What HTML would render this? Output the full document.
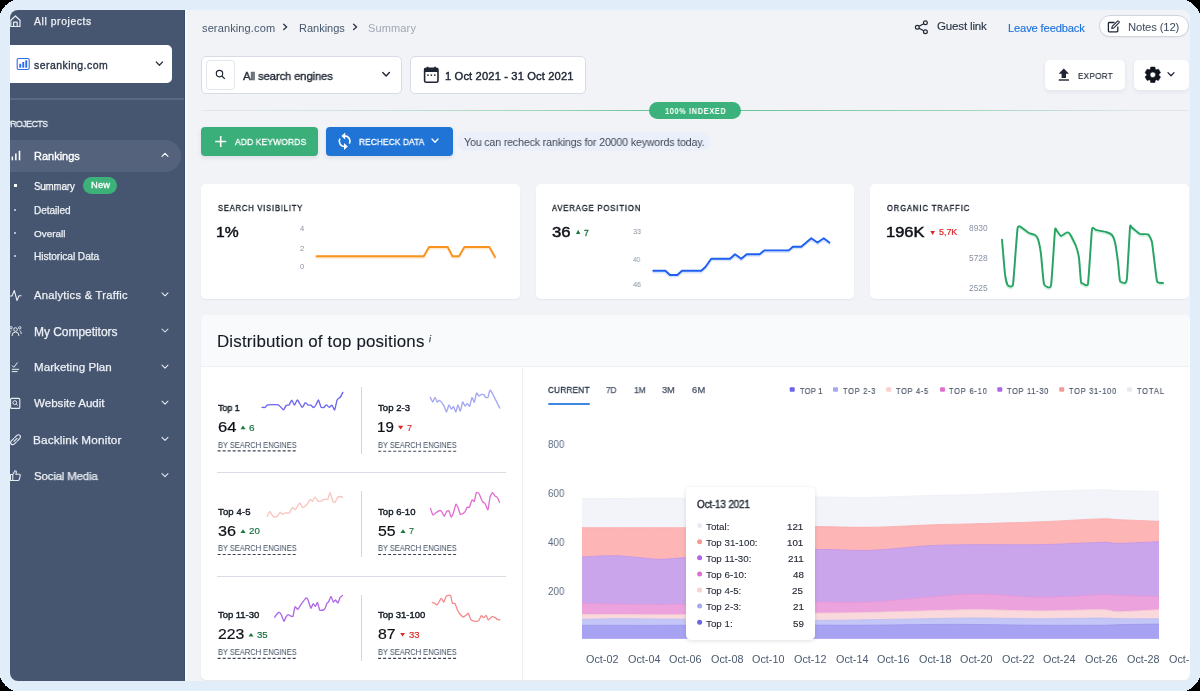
<!DOCTYPE html>
<html><head><meta charset="utf-8">
<style>
*{box-sizing:border-box;margin:0;padding:0}
html,body{width:1200px;height:691px;overflow:hidden;background:#000}
body{position:relative;font-family:"Liberation Sans",sans-serif}
#frame{position:absolute;left:0;top:0;width:1200px;height:691px;background:#e1eef9}
#app{position:absolute;left:10px;top:10px;width:1180px;height:670.7px;border-radius:8px;overflow:hidden;background:#f1f3f7}
#in{position:absolute;left:-10px;top:-10px;width:1200px;height:691px}
.a{position:absolute}
.t{position:absolute;white-space:nowrap;line-height:1;transform-origin:0 0;will-change:transform}
.box{position:absolute;background:#fff;border:1px solid #d6dbe4;border-radius:5px}
.card{position:absolute;background:#fff;border-radius:5px;box-shadow:0 1px 2px rgba(30,40,60,.06)}
svg{position:absolute;left:0;top:0;overflow:visible}
</style></head><body>
<div id="frame"></div>
<div id="app"><div id="in">
  <!-- sidebar -->
  <div class="a" style="left:10px;top:10px;width:175px;height:671px;background:#465670"></div>
  <div class="a" style="left:184px;top:10px;width:1px;height:670px;background:#38496a;opacity:.8"></div>
  <div class="a" style="left:185px;top:10px;width:1.5px;height:670px;background:#f9fafc"></div>
  <div class="a" style="left:6px;top:45px;width:166px;height:37.5px;background:#fff;border-radius:5px"></div>
  <div class="a" style="left:10px;top:98.3px;width:174px;height:1.5px;background:#5a697f"></div>
  <div class="a" style="left:-10px;top:140px;width:191px;height:32px;background:#54637b;border-radius:16px"></div>
  <div class="a" style="left:83.3px;top:177px;width:33.7px;height:17.2px;background:#3cb17a;border-radius:9px"></div>
  <div class="a" style="left:14.2px;top:183.7px;width:3px;height:3px;background:#fff"></div>
  <div class="a" style="left:14.2px;top:209.3px;width:2px;height:2px;background:#b3bcc9"></div>
  <div class="a" style="left:14.2px;top:232.3px;width:2px;height:2px;background:#b3bcc9"></div>
  <div class="a" style="left:14.2px;top:254.6px;width:2px;height:2px;background:#b3bcc9"></div>

  <!-- header boxes -->
  <div class="box" style="left:201px;top:56px;width:201px;height:37.5px"></div>
  <div class="a" style="left:206px;top:60px;width:29px;height:29.6px;border:1px solid #e3e7ee;border-radius:4px;background:#fff"></div>
  <div class="box" style="left:410.3px;top:56.3px;width:175.5px;height:37.4px"></div>
  <div class="a" style="left:1098.7px;top:15.3px;width:90px;height:22.2px;border:1px solid #cfd4dd;border-radius:11px;background:#fff;box-shadow:0 1px 2px rgba(0,0,0,.05)"></div>
  <div class="card" style="left:1045px;top:60px;width:80.3px;height:29.7px;box-shadow:0 2px 4px rgba(30,40,60,.07)"></div>
  <div class="card" style="left:1133.7px;top:60px;width:55.3px;height:29.7px;box-shadow:0 2px 4px rgba(30,40,60,.07)"></div>
  <div class="a" style="left:201px;top:109.5px;width:988px;height:1.3px;background:linear-gradient(90deg,#e3e6eb 0%,#cfe3dc 15%,#9fd5bb 35%,#6fc49c 45%,#6fc49c 56%,#9ad3b8 75%,#dfe5e8 95%,#e3e6eb 100%)"></div>
  <div class="a" style="left:648.7px;top:101.7px;width:92.3px;height:17px;background:#3bb27b;border-radius:8.5px"></div>
  <div class="a" style="left:201.2px;top:126.8px;width:116.8px;height:29px;background:#3aaf7a;border-radius:4px;box-shadow:0 2px 4px rgba(30,40,60,.10)"></div>
  <div class="a" style="left:326px;top:126.9px;width:126.5px;height:28.7px;background:#1f74d6;border-radius:4px;box-shadow:0 2px 4px rgba(30,40,60,.10)"></div>
  <div class="a" style="left:456.8px;top:131.8px;width:254.2px;height:19.2px;background:#ebeffa;border-radius:10px"></div>

  <!-- cards -->
  <div class="card" style="left:201px;top:184px;width:319px;height:114.5px"></div>
  <div class="card" style="left:536px;top:184px;width:317.75px;height:114.5px"></div>
  <div class="card" style="left:870.25px;top:184px;width:319px;height:114.5px"></div>

  <!-- distribution -->
  <div class="card" style="left:200.8px;top:314.7px;width:988.9px;height:365.5px;overflow:hidden">
    <div class="a" style="left:0;top:0;width:988px;height:52.3px;background:#f9fafc;border-bottom:1px solid #eef0f5"></div>
    <div class="a" style="left:321px;top:53.5px;width:1px;height:320px;background:#eceef3"></div>
  </div>
  <div class="a" style="left:217px;top:471.6px;width:289px;height:1px;background:#d9dee6"></div>
  <div class="a" style="left:217px;top:575.8px;width:289px;height:1px;background:#d9dee6"></div>
  <div class="a" style="left:361px;top:387.2px;width:1px;height:67px;background:#d0d6df"></div>
  <div class="a" style="left:361px;top:490.8px;width:1px;height:66.5px;background:#d0d6df"></div>
  <div class="a" style="left:361px;top:594.7px;width:1px;height:66.5px;background:#d0d6df"></div>
  <div class="a" style="left:548px;top:403px;width:42px;height:2px;background:#3d86e1;border-radius:1px"></div>

  <svg width="1200" height="691" viewBox="0 0 1200 691"><path d="M582.00,498.60 C588.00,498.58 605.50,498.55 618.00,498.50 C630.50,498.45 645.67,498.35 657.00,498.30 C668.33,498.25 670.33,498.32 686.00,498.20 C701.67,498.08 729.33,497.82 751.00,497.60 C772.67,497.38 796.17,496.93 816.00,496.90 C835.83,496.87 851.17,497.63 870.00,497.40 C888.83,497.17 911.17,495.97 929.00,495.50 C946.83,495.03 958.50,495.23 977.00,494.60 C995.50,493.97 1019.50,492.50 1040.00,491.70 C1060.50,490.90 1086.83,489.97 1100.00,489.80 C1113.17,489.63 1109.17,490.42 1119.00,490.70 C1128.83,490.98 1152.33,491.37 1159.00,491.50 L1159,638.8 L582,638.8 Z" fill="#f2f4f9"/>
<path d="M582.00,498.60 C588.00,498.58 605.50,498.55 618.00,498.50 C630.50,498.45 645.67,498.35 657.00,498.30 C668.33,498.25 670.33,498.32 686.00,498.20 C701.67,498.08 729.33,497.82 751.00,497.60 C772.67,497.38 796.17,496.93 816.00,496.90 C835.83,496.87 851.17,497.63 870.00,497.40 C888.83,497.17 911.17,495.97 929.00,495.50 C946.83,495.03 958.50,495.23 977.00,494.60 C995.50,493.97 1019.50,492.50 1040.00,491.70 C1060.50,490.90 1086.83,489.97 1100.00,489.80 C1113.17,489.63 1109.17,490.42 1119.00,490.70 C1128.83,490.98 1152.33,491.37 1159.00,491.50" fill="none" stroke="#eceff6" stroke-width="0.8"/>
<path d="M582.00,527.70 C588.00,527.70 605.50,527.70 618.00,527.70 C630.50,527.70 645.67,527.70 657.00,527.70 C668.33,527.70 670.33,527.78 686.00,527.70 C701.67,527.62 729.33,527.38 751.00,527.20 C772.67,527.02 796.17,526.58 816.00,526.60 C835.83,526.62 851.17,527.58 870.00,527.30 C888.83,527.02 911.17,525.50 929.00,524.90 C946.83,524.30 958.50,524.22 977.00,523.70 C995.50,523.18 1019.50,522.60 1040.00,521.80 C1060.50,521.00 1086.83,519.25 1100.00,518.90 C1113.17,518.55 1109.17,519.30 1119.00,519.70 C1128.83,520.10 1152.33,521.03 1159.00,521.30 L1159,638.8 L582,638.8 Z" fill="#fdb5b6"/>
<path d="M582.00,527.70 C588.00,527.70 605.50,527.70 618.00,527.70 C630.50,527.70 645.67,527.70 657.00,527.70 C668.33,527.70 670.33,527.78 686.00,527.70 C701.67,527.62 729.33,527.38 751.00,527.20 C772.67,527.02 796.17,526.58 816.00,526.60 C835.83,526.62 851.17,527.58 870.00,527.30 C888.83,527.02 911.17,525.50 929.00,524.90 C946.83,524.30 958.50,524.22 977.00,523.70 C995.50,523.18 1019.50,522.60 1040.00,521.80 C1060.50,521.00 1086.83,519.25 1100.00,518.90 C1113.17,518.55 1109.17,519.30 1119.00,519.70 C1128.83,520.10 1152.33,521.03 1159.00,521.30" fill="none" stroke="#fba9ab" stroke-width="0.8"/>
<path d="M582.00,556.90 C588.00,556.72 605.50,555.42 618.00,555.80 C630.50,556.18 645.67,558.90 657.00,559.20 C668.33,559.50 670.33,558.52 686.00,557.60 C701.67,556.68 729.33,555.05 751.00,553.70 C772.67,552.35 796.17,550.05 816.00,549.50 C835.83,548.95 851.17,551.03 870.00,550.40 C888.83,549.77 911.17,546.65 929.00,545.70 C946.83,544.75 958.50,544.87 977.00,544.70 C995.50,544.53 1019.50,545.08 1040.00,544.70 C1060.50,544.32 1086.83,542.63 1100.00,542.40 C1113.17,542.17 1109.17,543.42 1119.00,543.30 C1128.83,543.18 1152.33,541.97 1159.00,541.70 L1159,638.8 L582,638.8 Z" fill="#cba5ec"/>
<path d="M582.00,556.90 C588.00,556.72 605.50,555.42 618.00,555.80 C630.50,556.18 645.67,558.90 657.00,559.20 C668.33,559.50 670.33,558.52 686.00,557.60 C701.67,556.68 729.33,555.05 751.00,553.70 C772.67,552.35 796.17,550.05 816.00,549.50 C835.83,548.95 851.17,551.03 870.00,550.40 C888.83,549.77 911.17,546.65 929.00,545.70 C946.83,544.75 958.50,544.87 977.00,544.70 C995.50,544.53 1019.50,545.08 1040.00,544.70 C1060.50,544.32 1086.83,542.63 1100.00,542.40 C1113.17,542.17 1109.17,543.42 1119.00,543.30 C1128.83,543.18 1152.33,541.97 1159.00,541.70" fill="none" stroke="#c195ea" stroke-width="0.8"/>
<path d="M582.00,603.40 C588.00,603.52 605.50,603.88 618.00,604.10 C630.50,604.32 645.67,604.68 657.00,604.70 C668.33,604.72 670.33,604.47 686.00,604.20 C701.67,603.93 729.33,603.47 751.00,603.10 C772.67,602.73 796.17,602.18 816.00,602.00 C835.83,601.82 851.17,602.80 870.00,602.00 C888.83,601.20 911.17,598.52 929.00,597.20 C946.83,595.88 958.50,594.08 977.00,594.10 C995.50,594.12 1019.50,597.17 1040.00,597.30 C1060.50,597.43 1086.83,595.22 1100.00,594.90 C1113.17,594.58 1109.17,595.12 1119.00,595.40 C1128.83,595.68 1152.33,596.40 1159.00,596.60 L1159,638.8 L582,638.8 Z" fill="#eca3dd"/>
<path d="M582.00,603.40 C588.00,603.52 605.50,603.88 618.00,604.10 C630.50,604.32 645.67,604.68 657.00,604.70 C668.33,604.72 670.33,604.47 686.00,604.20 C701.67,603.93 729.33,603.47 751.00,603.10 C772.67,602.73 796.17,602.18 816.00,602.00 C835.83,601.82 851.17,602.80 870.00,602.00 C888.83,601.20 911.17,598.52 929.00,597.20 C946.83,595.88 958.50,594.08 977.00,594.10 C995.50,594.12 1019.50,597.17 1040.00,597.30 C1060.50,597.43 1086.83,595.22 1100.00,594.90 C1113.17,594.58 1109.17,595.12 1119.00,595.40 C1128.83,595.68 1152.33,596.40 1159.00,596.60" fill="none" stroke="#e797d8" stroke-width="0.8"/>
<path d="M582.00,614.60 C588.00,614.60 605.50,614.57 618.00,614.60 C630.50,614.63 645.67,614.78 657.00,614.80 C668.33,614.82 670.33,614.85 686.00,614.70 C701.67,614.55 729.33,614.15 751.00,613.90 C772.67,613.65 796.17,613.43 816.00,613.20 C835.83,612.97 851.17,612.90 870.00,612.50 C888.83,612.10 911.17,611.27 929.00,610.80 C946.83,610.33 958.50,609.67 977.00,609.70 C995.50,609.73 1019.50,611.00 1040.00,611.00 C1060.50,611.00 1086.83,609.58 1100.00,609.70 C1113.17,609.82 1109.17,611.70 1119.00,611.70 C1128.83,611.70 1152.33,610.03 1159.00,609.70 L1159,638.8 L582,638.8 Z" fill="#f9d9db"/>
<path d="M582.00,614.60 C588.00,614.60 605.50,614.57 618.00,614.60 C630.50,614.63 645.67,614.78 657.00,614.80 C668.33,614.82 670.33,614.85 686.00,614.70 C701.67,614.55 729.33,614.15 751.00,613.90 C772.67,613.65 796.17,613.43 816.00,613.20 C835.83,612.97 851.17,612.90 870.00,612.50 C888.83,612.10 911.17,611.27 929.00,610.80 C946.83,610.33 958.50,609.67 977.00,609.70 C995.50,609.73 1019.50,611.00 1040.00,611.00 C1060.50,611.00 1086.83,609.58 1100.00,609.70 C1113.17,609.82 1109.17,611.70 1119.00,611.70 C1128.83,611.70 1152.33,610.03 1159.00,609.70" fill="none" stroke="#f6d0d3" stroke-width="0.8"/>
<path d="M582.00,619.30 C588.00,619.20 605.50,618.75 618.00,618.70 C630.50,618.65 645.67,618.92 657.00,619.00 C668.33,619.08 670.33,619.07 686.00,619.20 C701.67,619.33 729.33,619.60 751.00,619.80 C772.67,620.00 796.17,620.42 816.00,620.40 C835.83,620.38 851.17,619.98 870.00,619.70 C888.83,619.42 911.17,618.98 929.00,618.70 C946.83,618.42 958.50,617.98 977.00,618.00 C995.50,618.02 1019.50,618.78 1040.00,618.80 C1060.50,618.82 1086.83,618.12 1100.00,618.10 C1113.17,618.08 1109.17,618.58 1119.00,618.70 C1128.83,618.82 1152.33,618.78 1159.00,618.80 L1159,638.8 L582,638.8 Z" fill="#c3c6f6"/>
<path d="M582.00,619.30 C588.00,619.20 605.50,618.75 618.00,618.70 C630.50,618.65 645.67,618.92 657.00,619.00 C668.33,619.08 670.33,619.07 686.00,619.20 C701.67,619.33 729.33,619.60 751.00,619.80 C772.67,620.00 796.17,620.42 816.00,620.40 C835.83,620.38 851.17,619.98 870.00,619.70 C888.83,619.42 911.17,618.98 929.00,618.70 C946.83,618.42 958.50,617.98 977.00,618.00 C995.50,618.02 1019.50,618.78 1040.00,618.80 C1060.50,618.82 1086.83,618.12 1100.00,618.10 C1113.17,618.08 1109.17,618.58 1119.00,618.70 C1128.83,618.82 1152.33,618.78 1159.00,618.80" fill="none" stroke="#b9bcf3" stroke-width="0.8"/>
<path d="M582.00,625.40 C588.00,625.40 605.50,625.40 618.00,625.40 C630.50,625.40 645.67,625.42 657.00,625.40 C668.33,625.38 670.33,625.33 686.00,625.30 C701.67,625.27 729.33,625.22 751.00,625.20 C772.67,625.18 796.17,625.20 816.00,625.20 C835.83,625.20 851.17,625.32 870.00,625.20 C888.83,625.08 911.17,624.62 929.00,624.50 C946.83,624.38 958.50,624.37 977.00,624.50 C995.50,624.63 1019.50,625.17 1040.00,625.30 C1060.50,625.43 1086.83,625.40 1100.00,625.30 C1113.17,625.20 1109.17,624.90 1119.00,624.70 C1128.83,624.50 1152.33,624.20 1159.00,624.10 L1159,638.8 L582,638.8 Z" fill="#a8a2f3"/>
<path d="M582.00,625.40 C588.00,625.40 605.50,625.40 618.00,625.40 C630.50,625.40 645.67,625.42 657.00,625.40 C668.33,625.38 670.33,625.33 686.00,625.30 C701.67,625.27 729.33,625.22 751.00,625.20 C772.67,625.18 796.17,625.20 816.00,625.20 C835.83,625.20 851.17,625.32 870.00,625.20 C888.83,625.08 911.17,624.62 929.00,624.50 C946.83,624.38 958.50,624.37 977.00,624.50 C995.50,624.63 1019.50,625.17 1040.00,625.30 C1060.50,625.43 1086.83,625.40 1100.00,625.30 C1113.17,625.20 1109.17,624.90 1119.00,624.70 C1128.83,624.50 1152.33,624.20 1159.00,624.10" fill="none" stroke="#9d96f0" stroke-width="0.8"/>
<path d="M316.50,257.85 L423.75,257.85 L429.00,248.60 L447.70,248.60 L452.50,257.85 L459.00,257.85 L464.40,248.60 L489.40,248.60 L495.00,258.50" fill="none" stroke="#fde3c4" stroke-width="2" stroke-linejoin="round" stroke-linecap="round" opacity="0.8"/>
<path d="M316.50,256.25 L423.75,256.25 L429.00,247.00 L447.70,247.00 L452.50,256.25 L459.00,256.25 L464.40,247.00 L489.40,247.00 L495.00,256.90" fill="none" stroke="#f7931e" stroke-width="1.9" stroke-linejoin="round" stroke-linecap="round"/>
<path d="M653.30,272.40 L665.40,272.40 L670.00,276.60 L677.30,276.60 L682.00,272.40 L701.25,272.40 L705.40,268.60 L711.25,260.35 L730.00,260.35 L735.00,255.80 L741.25,260.35 L746.70,255.80 L759.60,255.80 L764.20,252.00 L788.75,252.00 L792.90,248.30 L801.25,248.30 L811.25,239.90 L817.50,244.10 L823.75,239.90 L829.40,244.10" fill="none" stroke="#cfdcfb" stroke-width="2" stroke-linejoin="round" stroke-linecap="round" opacity="0.8"/>
<path d="M653.30,270.80 L665.40,270.80 L670.00,275.00 L677.30,275.00 L682.00,270.80 L701.25,270.80 L705.40,267.00 L711.25,258.75 L730.00,258.75 L735.00,254.20 L741.25,258.75 L746.70,254.20 L759.60,254.20 L764.20,250.40 L788.75,250.40 L792.90,246.70 L801.25,246.70 L811.25,238.30 L817.50,242.50 L823.75,238.30 L829.40,242.50" fill="none" stroke="#1d5ff0" stroke-width="1.9" stroke-linejoin="round" stroke-linecap="round"/>
<path d="M1002.00,241.20 C1002.21,243.66 1004.60,272.36 1005.00,275.60 C1005.40,278.84 1007.03,285.86 1007.60,286.60 C1008.17,287.34 1012.29,290.07 1013.00,286.00 C1013.71,281.93 1016.89,233.59 1017.60,229.60 C1018.31,225.61 1022.19,229.84 1023.00,230.20 C1023.81,230.56 1028.14,234.14 1029.00,234.60 C1029.86,235.06 1034.36,236.17 1035.00,236.60 C1035.64,237.03 1037.57,239.24 1038.00,240.60 C1038.43,241.96 1040.57,252.39 1041.00,255.60 C1041.43,258.81 1043.29,283.34 1044.00,285.60 C1044.71,287.86 1050.21,291.06 1051.00,287.20 C1051.79,283.34 1054.57,235.50 1055.00,231.60 C1055.43,227.70 1056.57,232.17 1057.00,232.60 C1057.43,233.03 1060.29,237.50 1061.00,237.60 C1061.71,237.70 1066.36,234.14 1067.00,234.00 C1067.64,233.86 1069.36,234.63 1070.00,235.60 C1070.64,236.57 1075.36,245.89 1076.00,247.60 C1076.64,249.31 1078.64,257.03 1079.00,259.60 C1079.36,262.17 1080.71,281.77 1081.00,283.60 C1081.29,285.43 1082.50,285.09 1083.00,285.20 C1083.50,285.31 1087.36,289.07 1088.00,285.20 C1088.64,281.33 1091.43,234.83 1092.00,231.00 C1092.57,227.17 1095.00,231.41 1096.00,231.60 C1097.00,231.79 1104.86,233.24 1106.00,233.60 C1107.14,233.96 1111.36,235.89 1112.00,236.60 C1112.64,237.31 1114.57,241.67 1115.00,243.60 C1115.43,245.53 1117.64,260.81 1118.00,263.60 C1118.36,266.39 1119.50,281.10 1120.00,282.60 C1120.50,284.10 1124.50,284.81 1125.00,284.60 C1125.50,284.39 1126.64,283.60 1127.00,279.60 C1127.36,275.60 1129.64,232.20 1130.00,228.60 C1130.36,225.00 1131.29,228.70 1132.00,229.20 C1132.71,229.70 1138.86,235.11 1140.00,235.60 C1141.14,236.09 1147.14,235.43 1148.00,236.00 C1148.86,236.57 1151.36,240.27 1152.00,243.60 C1152.64,246.93 1156.21,279.67 1157.00,282.60 C1157.79,285.53 1162.57,284.46 1163.00,284.60" fill="none" stroke="#cdeedb" stroke-width="2" stroke-linejoin="round" stroke-linecap="round" opacity="0.8"/>
<path d="M1002.00,239.60 C1002.21,242.06 1004.60,270.76 1005.00,274.00 C1005.40,277.24 1007.03,284.26 1007.60,285.00 C1008.17,285.74 1012.29,288.47 1013.00,284.40 C1013.71,280.33 1016.89,231.99 1017.60,228.00 C1018.31,224.01 1022.19,228.24 1023.00,228.60 C1023.81,228.96 1028.14,232.54 1029.00,233.00 C1029.86,233.46 1034.36,234.57 1035.00,235.00 C1035.64,235.43 1037.57,237.64 1038.00,239.00 C1038.43,240.36 1040.57,250.79 1041.00,254.00 C1041.43,257.21 1043.29,281.74 1044.00,284.00 C1044.71,286.26 1050.21,289.46 1051.00,285.60 C1051.79,281.74 1054.57,233.90 1055.00,230.00 C1055.43,226.10 1056.57,230.57 1057.00,231.00 C1057.43,231.43 1060.29,235.90 1061.00,236.00 C1061.71,236.10 1066.36,232.54 1067.00,232.40 C1067.64,232.26 1069.36,233.03 1070.00,234.00 C1070.64,234.97 1075.36,244.29 1076.00,246.00 C1076.64,247.71 1078.64,255.43 1079.00,258.00 C1079.36,260.57 1080.71,280.17 1081.00,282.00 C1081.29,283.83 1082.50,283.49 1083.00,283.60 C1083.50,283.71 1087.36,287.47 1088.00,283.60 C1088.64,279.73 1091.43,233.23 1092.00,229.40 C1092.57,225.57 1095.00,229.81 1096.00,230.00 C1097.00,230.19 1104.86,231.64 1106.00,232.00 C1107.14,232.36 1111.36,234.29 1112.00,235.00 C1112.64,235.71 1114.57,240.07 1115.00,242.00 C1115.43,243.93 1117.64,259.21 1118.00,262.00 C1118.36,264.79 1119.50,279.50 1120.00,281.00 C1120.50,282.50 1124.50,283.21 1125.00,283.00 C1125.50,282.79 1126.64,282.00 1127.00,278.00 C1127.36,274.00 1129.64,230.60 1130.00,227.00 C1130.36,223.40 1131.29,227.10 1132.00,227.60 C1132.71,228.10 1138.86,233.51 1140.00,234.00 C1141.14,234.49 1147.14,233.83 1148.00,234.40 C1148.86,234.97 1151.36,238.67 1152.00,242.00 C1152.64,245.33 1156.21,278.07 1157.00,281.00 C1157.79,283.93 1162.57,282.86 1163.00,283.00" fill="none" stroke="#27a463" stroke-width="1.9" stroke-linejoin="round" stroke-linecap="round"/>
<path d="M262.10,407.40 C262.35,407.40 264.63,407.61 265.10,407.40 C265.57,407.19 266.65,405.11 267.75,404.90 C268.85,404.69 276.94,404.48 278.25,404.90 C279.56,405.32 282.85,409.86 283.50,409.90 C284.15,409.94 285.63,405.82 286.10,405.40 C286.57,404.98 288.63,405.33 289.10,404.90 C289.57,404.47 291.31,400.18 291.75,400.20 C292.19,400.22 293.93,405.12 294.40,405.10 C294.87,405.08 296.75,399.81 297.40,400.00 C298.05,400.19 301.60,407.18 302.25,407.40 C302.90,407.62 304.75,402.79 305.25,402.60 C305.75,402.41 307.78,404.89 308.25,405.10 C308.72,405.31 310.46,404.90 310.90,405.10 C311.34,405.30 313.09,407.49 313.50,407.50 C313.91,407.51 315.39,405.88 315.80,405.25 C316.21,404.62 317.97,399.85 318.40,400.00 C318.83,400.15 320.53,406.48 321.00,407.10 C321.47,407.72 323.56,407.58 324.00,407.40 C324.44,407.22 325.86,404.90 326.30,404.90 C326.74,404.90 328.83,407.38 329.30,407.40 C329.77,407.42 331.45,404.89 331.90,405.10 C332.35,405.31 334.27,410.32 334.70,409.90 C335.13,409.47 336.62,401.07 337.10,400.00 C337.58,398.93 340.02,397.64 340.50,397.00 C340.98,396.36 342.61,392.74 342.80,392.35" fill="none" stroke="#6c65f0" stroke-width="1.35" stroke-linejoin="round" stroke-linecap="round"/>
<path d="M430.30,397.30 C430.50,397.69 432.31,401.98 432.70,402.00 C433.09,402.02 434.62,397.50 435.00,397.50 C435.38,397.50 436.91,401.75 437.30,402.00 C437.69,402.25 439.17,400.23 439.70,400.50 C440.23,400.77 443.13,404.34 443.70,405.30 C444.27,406.26 446.07,412.02 446.50,412.00 C446.93,411.98 448.50,405.24 448.90,405.00 C449.30,404.76 450.92,408.98 451.30,409.10 C451.68,409.23 453.12,406.26 453.50,406.50 C453.88,406.74 455.43,412.13 455.80,412.00 C456.18,411.87 457.62,404.97 458.00,404.90 C458.38,404.82 459.91,411.34 460.30,411.10 C460.69,410.86 462.31,402.41 462.70,402.00 C463.09,401.59 464.62,406.09 465.00,406.20 C465.38,406.31 466.91,403.30 467.30,403.30 C467.69,403.30 469.31,406.68 469.70,406.20 C470.09,405.72 471.62,397.83 472.00,397.50 C472.38,397.17 473.93,402.57 474.30,402.20 C474.68,401.83 476.12,393.60 476.50,393.10 C476.88,392.60 478.52,396.07 478.90,396.20 C479.27,396.33 480.60,394.82 481.00,394.70 C481.40,394.57 483.31,394.48 483.70,394.70 C484.09,394.92 485.34,397.08 485.70,397.30 C486.06,397.52 487.60,397.89 488.00,397.30 C488.40,396.71 489.52,389.31 490.50,390.20 C491.48,391.09 498.93,406.52 499.70,408.00" fill="none" stroke="#a3a6f1" stroke-width="1.35" stroke-linejoin="round" stroke-linecap="round"/>
<path d="M267.30,516.30 C267.52,515.89 269.46,511.42 269.90,511.40 C270.34,511.38 272.13,515.53 272.60,516.00 C273.07,516.47 275.06,517.03 275.50,517.00 C275.94,516.97 277.52,516.01 277.90,515.60 C278.28,515.19 279.72,512.21 280.10,512.10 C280.48,511.99 282.06,514.23 282.50,514.30 C282.94,514.37 284.83,513.02 285.40,512.90 C285.97,512.78 288.71,513.35 289.30,512.90 C289.89,512.45 292.00,507.77 292.50,507.50 C293.00,507.23 294.68,509.98 295.30,509.60 C295.92,509.23 299.28,503.16 299.90,503.00 C300.52,502.84 302.08,507.61 302.70,507.70 C303.32,507.79 306.68,504.80 307.30,504.10 C307.93,503.40 309.77,499.53 310.20,499.30 C310.62,499.07 312.00,501.48 312.40,501.30 C312.80,501.12 314.53,497.22 315.00,497.20 C315.47,497.18 317.52,500.78 318.00,501.10 C318.48,501.43 320.28,501.25 320.80,501.10 C321.32,500.95 323.71,499.46 324.30,499.30 C324.89,499.14 327.42,499.76 327.90,499.20 C328.38,498.64 329.69,492.44 330.10,492.60 C330.51,492.76 332.40,500.28 332.80,501.10 C333.20,501.93 334.48,502.82 334.90,502.50 C335.32,502.18 337.32,497.70 337.80,497.20 C338.28,496.70 340.19,496.49 340.60,496.50 C341.01,496.51 342.52,497.28 342.70,497.35" fill="none" stroke="#f8c5bf" stroke-width="1.35" stroke-linejoin="round" stroke-linecap="round"/>
<path d="M430.50,508.50 C430.70,509.04 432.38,514.68 432.90,515.00 C433.42,515.32 436.13,512.67 436.70,512.30 C437.27,511.92 439.28,510.55 439.70,510.50 C440.12,510.45 441.32,511.22 441.70,511.70 C442.08,512.18 443.92,516.28 444.30,516.30 C444.68,516.32 445.92,512.37 446.30,511.90 C446.68,511.43 448.48,510.26 448.90,510.70 C449.32,511.14 450.90,517.09 451.30,517.20 C451.70,517.31 453.32,513.08 453.70,512.00 C454.07,510.93 455.47,504.74 455.80,504.30 C456.13,503.86 457.33,505.89 457.70,506.70 C458.07,507.51 459.78,513.42 460.20,514.00 C460.62,514.58 462.27,513.93 462.70,513.70 C463.12,513.48 464.94,511.83 465.30,511.30 C465.66,510.77 466.65,507.66 467.00,507.30 C467.35,506.94 469.08,507.62 469.50,507.00 C469.92,506.38 471.60,500.38 472.00,499.90 C472.40,499.42 473.94,501.90 474.30,501.30 C474.66,500.70 475.91,493.33 476.30,492.70 C476.69,492.07 478.50,492.98 479.00,493.70 C479.50,494.42 481.80,500.47 482.30,501.30 C482.80,502.13 484.52,503.00 485.00,503.70 C485.48,504.40 487.58,510.23 488.00,509.70 C488.42,509.17 489.62,498.73 490.00,497.30 C490.38,495.87 492.08,492.60 492.50,492.50 C492.92,492.40 494.60,495.70 495.00,496.10 C495.40,496.50 496.93,496.78 497.30,497.30 C497.68,497.82 499.32,501.88 499.50,502.30" fill="none" stroke="#e26fd3" stroke-width="1.35" stroke-linejoin="round" stroke-linecap="round"/>
<path d="M274.70,617.30 C274.87,617.05 276.32,614.72 276.70,614.30 C277.08,613.88 278.92,612.27 279.30,612.30 C279.68,612.33 280.92,613.96 281.30,614.70 C281.68,615.44 283.51,621.01 283.90,621.20 C284.29,621.39 285.63,617.54 286.00,617.00 C286.37,616.46 287.91,614.78 288.30,614.70 C288.69,614.62 290.31,615.98 290.70,616.10 C291.09,616.22 292.64,616.88 293.00,616.10 C293.36,615.33 294.61,607.37 295.00,606.80 C295.39,606.23 297.18,609.53 297.70,609.30 C298.22,609.07 300.61,604.94 301.30,604.00 C301.99,603.06 305.44,598.33 306.00,598.00 C306.56,597.67 307.60,599.16 308.00,600.00 C308.40,600.84 310.37,607.79 310.80,608.10 C311.23,608.41 312.81,603.85 313.20,603.70 C313.59,603.55 315.14,606.40 315.50,606.30 C315.86,606.20 317.15,602.19 317.50,602.50 C317.85,602.81 319.22,609.38 319.70,610.00 C320.18,610.62 322.83,610.17 323.30,610.00 C323.77,609.83 325.02,608.52 325.30,608.00 C325.58,607.48 326.42,604.23 326.70,603.70 C326.98,603.18 328.34,602.32 328.70,601.70 C329.06,601.08 330.62,596.27 331.00,596.30 C331.38,596.32 332.93,601.70 333.30,602.00 C333.68,602.30 335.12,599.80 335.50,599.90 C335.88,600.00 337.52,603.40 337.90,603.20 C338.27,603.00 339.62,598.14 340.00,597.50 C340.38,596.86 342.29,595.67 342.50,595.50" fill="none" stroke="#ae68e6" stroke-width="1.35" stroke-linejoin="round" stroke-linecap="round"/>
<path d="M432.30,602.50 C432.50,602.56 434.31,602.99 434.70,603.20 C435.09,603.41 436.45,605.41 437.00,605.00 C437.55,604.59 440.74,598.52 441.30,598.30 C441.86,598.07 443.31,602.43 443.70,602.30 C444.09,602.17 445.64,597.28 446.00,596.70 C446.36,596.12 447.61,595.38 448.00,595.30 C448.39,595.22 450.34,595.04 450.70,595.70 C451.06,596.36 451.94,602.55 452.30,603.20 C452.66,603.85 454.58,602.96 455.00,603.50 C455.42,604.04 456.82,608.74 457.30,609.70 C457.78,610.66 460.17,614.39 460.70,615.00 C461.23,615.61 463.23,617.00 463.70,617.00 C464.17,617.00 465.92,615.31 466.30,615.00 C466.68,614.69 467.93,612.94 468.30,613.30 C468.67,613.66 470.28,618.67 470.70,619.30 C471.12,619.92 472.75,620.63 473.30,620.80 C473.85,620.97 476.80,621.39 477.30,621.30 C477.80,621.21 478.97,620.17 479.30,619.70 C479.63,619.23 480.93,615.87 481.30,615.70 C481.67,615.53 483.30,617.73 483.70,617.70 C484.10,617.67 485.72,615.11 486.10,615.30 C486.48,615.49 487.81,619.88 488.30,620.00 C488.79,620.12 491.47,616.93 492.00,616.70 C492.53,616.48 494.26,617.08 494.70,617.30 C495.14,617.52 496.88,619.07 497.30,619.30 C497.72,619.52 499.50,619.94 499.70,620.00" fill="none" stroke="#f68c8a" stroke-width="1.35" stroke-linejoin="round" stroke-linecap="round"/></svg>
  <!-- tooltip -->
  <div class="a" style="left:686px;top:486.7px;width:129px;height:152.9px;background:#fff;border-radius:5px;box-shadow:0 1px 4px rgba(30,40,60,.14)"></div>
  <svg width="1200" height="691" viewBox="0 0 1200 691"><path d="M10.8,26.5 V20.3 L15.4,16 L20,20.3 V26.5 Z M13.6,26.5 V22.2 H17.2 V26.5" fill="none" stroke="#e9edf3" stroke-width="1.2" stroke-linejoin="round"/>
<rect x="17.2" y="58.5" width="12" height="11" rx="1.5" fill="none" stroke="#2b6cf0" stroke-width="1.1"/>
<rect x="19.3" y="63.8" width="1.9" height="3.9" fill="#2b6cf0"/><rect x="22.3" y="62" width="1.9" height="5.7" fill="#2b6cf0"/><rect x="25.3" y="60.3" width="1.9" height="7.4" fill="#2b6cf0"/>
<path d="M156.3,62 L159.4,65.2 L162.5,62" fill="none" stroke="#2d3748" stroke-width="1.3" stroke-linecap="round" stroke-linejoin="round"/>
<rect x="11.6" y="156.5" width="1.5" height="3.8" fill="#fff"/><rect x="15.1" y="153.5" width="1.5" height="6.8" fill="#fff"/><rect x="18.7" y="150.8" width="1.6" height="9.5" fill="#fff"/>
<path d="M162,156.3 L165,153.3 L168,156.3" fill="none" stroke="#fff" stroke-width="1.1" stroke-linecap="round" stroke-linejoin="round"/>
<path d="M162,292.8 L165,295.8 L168,292.8" fill="none" stroke="#e9edf3" stroke-width="1.05" stroke-linecap="round" stroke-linejoin="round"/>
<path d="M162,329.0 L165,332.0 L168,329.0" fill="none" stroke="#e9edf3" stroke-width="1.05" stroke-linecap="round" stroke-linejoin="round"/>
<path d="M162,365.1 L165,368.1 L168,365.1" fill="none" stroke="#e9edf3" stroke-width="1.05" stroke-linecap="round" stroke-linejoin="round"/>
<path d="M162,401.2 L165,404.2 L168,401.2" fill="none" stroke="#e9edf3" stroke-width="1.05" stroke-linecap="round" stroke-linejoin="round"/>
<path d="M162,437.4 L165,440.4 L168,437.4" fill="none" stroke="#e9edf3" stroke-width="1.05" stroke-linecap="round" stroke-linejoin="round"/>
<path d="M162,473.7 L165,476.7 L168,473.7" fill="none" stroke="#e9edf3" stroke-width="1.05" stroke-linecap="round" stroke-linejoin="round"/>
<path d="M9,296 L12,296 L14.3,290.5 L17,300.5 L19,295.8 L21.5,295.8" fill="none" stroke="#e9edf3" stroke-width="1.1" stroke-linejoin="round"/>
<circle cx="15.5" cy="329.5" r="1.8" fill="none" stroke="#e9edf3" stroke-width="1"/><circle cx="19.8" cy="327.8" r="1.2" fill="none" stroke="#e9edf3" stroke-width="0.9"/><circle cx="11" cy="327.8" r="1.2" fill="none" stroke="#e9edf3" stroke-width="0.9"/>
<path d="M12,336 Q12,332 15.5,332 Q19,332 19,336" fill="none" stroke="#e9edf3" stroke-width="1"/><path d="M19.5,330.5 Q21.3,331 21.3,334" fill="none" stroke="#e9edf3" stroke-width="0.9"/><path d="M11.5,330.5 Q9.7,331 9.7,334" fill="none" stroke="#e9edf3" stroke-width="0.9"/>
<path d="M12,365.5 L13.8,367.3 L17.5,362.5" fill="none" stroke="#e9edf3" stroke-width="1"/><path d="M11.8,369.3 H19 M11.8,371.6 H17.5" stroke="#e9edf3" stroke-width="1"/>
<rect x="10.6" y="398.4" width="9.2" height="10" rx="1" fill="none" stroke="#e9edf3" stroke-width="1.1"/><circle cx="14.8" cy="402.6" r="1.9" fill="none" stroke="#e9edf3" stroke-width="1"/><path d="M16.2,404 L17.8,405.6" stroke="#e9edf3" stroke-width="1"/>
<path d="M13.6,438.6 L11.4,440.8 Q9.8,442.6 11.2,444 Q12.6,445.4 14.4,443.8 L16.4,441.8 M17.4,440.8 L19.6,438.6 Q21.2,436.8 19.8,435.4 Q18.4,434 16.6,435.6 L14.6,437.6 M14,441.4 L17,438.4" fill="none" stroke="#e9edf3" stroke-width="1.1" stroke-linecap="round"/>
<path d="M10.5,474.5 H12.8 V480.5 H10.5 Z M12.8,474.5 L15,470.8 Q16.5,470.5 16.3,472.5 L15.8,474.3 H19.3 Q20.5,474.5 20.2,475.8 L19.2,479.6 Q19,480.5 17.8,480.5 H12.8" fill="none" stroke="#e9edf3" stroke-width="1.1" stroke-linejoin="round"/>
<path d="M283.7,24.3 L286.7,26.9 L283.7,29.5 M353.6,24.3 L356.6,26.9 L353.6,29.5" fill="none" stroke="#2d3748" stroke-width="1.3" stroke-linecap="round" stroke-linejoin="round"/>
<circle cx="219.5" cy="73.6" r="3.2" fill="none" stroke="#1f2633" stroke-width="1.15"/><path d="M221.9,76 L224.8,78.9" stroke="#1f2633" stroke-width="1.2" stroke-linecap="butt"/>
<path d="M382.8,72.5 L386.1,75.9 L389.4,72.5" fill="none" stroke="#1f2633" stroke-width="1.4" stroke-linecap="round" stroke-linejoin="round"/>
<rect x="424.6" y="68.4" width="13.4" height="13.9" rx="1.6" fill="none" stroke="#1f2633" stroke-width="1.6"/><rect x="424.6" y="68.4" width="13.4" height="3.6" fill="#1f2633"/><rect x="426.8" y="66.7" width="1.6" height="2.5" fill="#1f2633"/><rect x="434.2" y="66.7" width="1.6" height="2.5" fill="#1f2633"/>
<rect x="427.2" y="74.4" width="1.5" height="1.5" fill="#1f2633"/><rect x="430.6" y="74.4" width="1.5" height="1.5" fill="#1f2633"/><rect x="434" y="74.4" width="1.5" height="1.5" fill="#1f2633"/>
<circle cx="917.3" cy="27.3" r="1.9" fill="none" stroke="#1f2633" stroke-width="1.2"/><circle cx="925.4" cy="22.8" r="1.9" fill="none" stroke="#1f2633" stroke-width="1.2"/><circle cx="925.4" cy="31.7" r="1.9" fill="none" stroke="#1f2633" stroke-width="1.2"/><path d="M919,26.3 L923.7,23.8 M919,28.3 L923.7,30.8" stroke="#1f2633" stroke-width="1.2"/>
<path d="M1114.5,22.5 H1109.2 Q1108.4,22.5 1108.4,23.3 V31 Q1108.4,31.8 1109.2,31.8 H1117 Q1117.8,31.8 1117.8,31 V26.5" fill="none" stroke="#1f2633" stroke-width="1.3"/><path d="M1111.8,28.6 L1112.2,26.4 L1117.3,21.3 Q1118.2,20.6 1118.9,21.3 Q1119.6,22 1118.9,22.8 L1113.8,27.9 Z" fill="none" stroke="#1f2633" stroke-width="1.1" stroke-linejoin="round"/>
<path d="M1063.8,68.4 L1069,73.8 H1066 V78 H1061.6 V73.8 H1058.6 Z" fill="#1f2633"/><rect x="1058.7" y="79.3" width="10.3" height="1.4" fill="#1f2633"/>
<path d="M1150.73,67.07 L1154.87,67.07 L1155.28,69.23 L1156.39,69.86 L1158.46,69.14 L1160.53,72.73 L1158.87,74.16 L1158.87,75.44 L1160.53,76.87 L1158.46,80.46 L1156.39,79.74 L1155.28,80.37 L1154.87,82.53 L1150.73,82.53 L1150.32,80.37 L1149.21,79.74 L1147.14,80.46 L1145.07,76.87 L1146.73,75.44 L1146.73,74.16 L1145.07,72.73 L1147.14,69.14 L1149.21,69.86 L1150.32,69.23 Z M1155.60,74.80 A2.8,2.8 0 1,0 1150.00,74.80 A2.8,2.8 0 1,0 1155.60,74.80 Z" fill="#0f141c" fill-rule="evenodd" stroke="#0f141c" stroke-width="0.6" stroke-linejoin="round"/>
<path d="M1168,72.6 L1171,75.8 L1174,72.6" fill="none" stroke="#1f2633" stroke-width="1.3" stroke-linecap="round" stroke-linejoin="round"/>
<path d="M220.7,136 V147 M215.2,141.5 H226.2" stroke="#fff" stroke-width="1.6"/>
<path d="M344.8,135.9 A5.3,5.3 0 0,1 349.4,143.6 M339.9,138.6 A5.3,5.3 0 0,0 344.4,146.5" fill="none" stroke="#fff" stroke-width="1.6" stroke-linecap="butt"/>
<path d="M341.4,135.9 L345.2,132.4 L345.2,139.4 Z M347.8,146.5 L344.0,143.0 L344.0,150.0 Z" fill="#fff"/>
<path d="M432,139 L435,142.2 L438,139" fill="none" stroke="#fff" stroke-width="1.3" stroke-linecap="round" stroke-linejoin="round"/>
<path d="M576,234 L578.15,229.8 L580.3,234 Z" fill="#177a3b"/>
<path d="M930.3,231 L932.65,235 L935,231 Z" fill="#dc2626"/>
<path d="M240.5,429.2 L243.05,425.6 L245.6,429.2 Z" fill="#177a3b"/>
<path d="M398,425.8 L400.65,429.5 L403.3,425.8 Z" fill="#dc2626"/>
<path d="M240.5,532.9 L243.05,529.3 L245.6,532.9 Z" fill="#177a3b"/>
<path d="M400.5,532.9 L403.05,529.3 L405.6,532.9 Z" fill="#177a3b"/>
<path d="M248.5,636.6 L251.05,633 L253.6,636.6 Z" fill="#177a3b"/>
<path d="M400.2,633 L402.60,636.6 L405,633 Z" fill="#dc2626"/>
<path d="M217.65,450.9 H297.05" stroke="#3b4556" stroke-width="1.2" stroke-dasharray="3,2"/>
<path d="M378.2,451.25 H457.60" stroke="#3b4556" stroke-width="1.2" stroke-dasharray="3,2"/>
<path d="M217.65,554.5 H297.05" stroke="#3b4556" stroke-width="1.2" stroke-dasharray="3,2"/>
<path d="M378.1,554.5 H457.50" stroke="#3b4556" stroke-width="1.2" stroke-dasharray="3,2"/>
<path d="M217.65,658.4 H297.05" stroke="#3b4556" stroke-width="1.2" stroke-dasharray="3,2"/>
<path d="M378.1,658.4 H457.50" stroke="#3b4556" stroke-width="1.2" stroke-dasharray="3,2"/>
<rect x="789.7" y="387.2" width="5" height="4.6" rx="1" fill="#6c63e6"/>
<rect x="833" y="387.2" width="5" height="4.6" rx="1" fill="#a6a9ef"/>
<rect x="886.2" y="387.2" width="5" height="4.6" rx="1" fill="#f9d0cb"/>
<rect x="940" y="387.2" width="5" height="4.6" rx="1" fill="#e070d0"/>
<rect x="997.3" y="387.2" width="5" height="4.6" rx="1" fill="#b065e8"/>
<rect x="1059.2" y="387.2" width="5" height="4.6" rx="1" fill="#f49a95"/>
<rect x="1127" y="387.2" width="5" height="4.6" rx="1" fill="#e6eaf2"/>
<circle cx="699.6" cy="525.60" r="2.5" fill="#e8ebf3"/>
<circle cx="699.6" cy="541.70" r="2.5" fill="#f49a95"/>
<circle cx="699.6" cy="557.80" r="2.5" fill="#b065e8"/>
<circle cx="699.6" cy="573.90" r="2.5" fill="#e070d0"/>
<circle cx="699.6" cy="590.00" r="2.5" fill="#f9d0cb"/>
<circle cx="699.6" cy="606.10" r="2.5" fill="#a6a9ef"/>
<circle cx="699.6" cy="622.20" r="2.5" fill="#6c63e6"/></svg>
  <div class="t" style="left:34.30px;top:16.95px;font-size:10.34px;color:#eef1f6;-webkit-text-stroke:0.25px #eef1f6;letter-spacing:0.605px;">All projects</div>
<div class="t" style="left:34.00px;top:60.54px;font-size:10.47px;color:#2d3748;-webkit-text-stroke:0.35px #2d3748;letter-spacing:0.470px;">seranking.com</div>
<div class="t" style="left:5.00px;top:118.80px;font-size:9.92px;color:#eef1f6;-webkit-text-stroke:0.35px #eef1f6;letter-spacing:-0.575px;transform:scaleX(0.8800);">PROJECTS</div>
<div class="t" style="left:34.30px;top:151.36px;font-size:11.03px;color:#ffffff;-webkit-text-stroke:0.35px #ffffff;letter-spacing:-0.017px;">Rankings</div>
<div class="t" style="left:34.20px;top:181.30px;font-size:10.75px;color:#ffffff;-webkit-text-stroke:0.25px #ffffff;letter-spacing:-0.161px;transform:scaleX(0.9047);">Summary</div>
<div class="t" style="left:90.80px;top:180.78px;font-size:9.36px;color:#ffffff;-webkit-text-stroke:0.3px #ffffff;letter-spacing:0.128px;">New</div>
<div class="t" style="left:34.20px;top:206.38px;font-size:10.06px;color:#eef1f6;-webkit-text-stroke:0.25px #eef1f6;letter-spacing:-0.025px;">Detailed</div>
<div class="t" style="left:34.00px;top:229.40px;font-size:9.92px;color:#eef1f6;-webkit-text-stroke:0.25px #eef1f6;letter-spacing:0.020px;">Overall</div>
<div class="t" style="left:34.00px;top:251.67px;font-size:10.20px;color:#eef1f6;-webkit-text-stroke:0.25px #eef1f6;letter-spacing:-0.077px;">Historical Data</div>
<div class="t" style="left:34.00px;top:290.04px;font-size:11.17px;color:#eef1f6;-webkit-text-stroke:0.25px #eef1f6;letter-spacing:0.290px;">Analytics &amp; Traffic</div>
<div class="t" style="left:34.00px;top:325.83px;font-size:12.01px;color:#eef1f6;-webkit-text-stroke:0.25px #eef1f6;letter-spacing:-0.040px;">My Competitors</div>
<div class="t" style="left:34.00px;top:362.19px;font-size:11.59px;color:#eef1f6;-webkit-text-stroke:0.25px #eef1f6;letter-spacing:0.040px;">Marketing Plan</div>
<div class="t" style="left:34.20px;top:398.39px;font-size:11.59px;color:#eef1f6;-webkit-text-stroke:0.25px #eef1f6;">Website Audit</div>
<div class="t" style="left:33.30px;top:434.47px;font-size:11.73px;color:#eef1f6;-webkit-text-stroke:0.25px #eef1f6;letter-spacing:0.162px;">Backlink Monitor</div>
<div class="t" style="left:34.00px;top:470.89px;font-size:11.59px;color:#eef1f6;-webkit-text-stroke:0.25px #eef1f6;letter-spacing:-0.174px;transform:scaleX(0.9902);">Social Media</div>
<div class="t" style="left:201.70px;top:22.86px;font-size:11.03px;color:#46566b;letter-spacing:0.120px;">seranking.com</div>
<div class="t" style="left:298.50px;top:22.86px;font-size:11.03px;color:#46566b;letter-spacing:-0.017px;">Rankings</div>
<div class="t" style="left:368.30px;top:22.86px;font-size:11.03px;color:#a0a8b4;letter-spacing:0.130px;">Summary</div>
<div class="t" style="left:243.30px;top:70.17px;font-size:11.73px;color:#1f2633;-webkit-text-stroke:0.35px #1f2633;letter-spacing:-0.176px;transform:scaleX(0.9687);">All search engines</div>
<div class="t" style="left:445.00px;top:70.94px;font-size:11.17px;color:#1f2633;-webkit-text-stroke:0.4px #1f2633;letter-spacing:0.140px;">1 Oct 2021 - 31 Oct 2021</div>
<div class="t" style="left:937.00px;top:20.99px;font-size:11.59px;color:#263140;-webkit-text-stroke:0.1px #263140;letter-spacing:-0.174px;">Guest link</div>
<div class="t" style="left:1008.00px;top:23.44px;font-size:11.17px;color:#1f72dc;-webkit-text-stroke:0.15px #1f72dc;letter-spacing:-0.146px;">Leave feedback</div>
<div class="t" style="left:1127.80px;top:22.03px;font-size:11.31px;color:#3b4a5e;letter-spacing:-0.153px;">Notes (12)</div>
<div class="t" style="left:1077.70px;top:71.71px;font-size:9.08px;color:#1f2633;-webkit-text-stroke:0.2px #1f2633;letter-spacing:0.522px;transform:scaleX(0.8700);">EXPORT</div>
<div class="t" style="left:664.70px;top:106.61px;font-size:8.38px;color:#ffffff;font-weight:700;letter-spacing:0.793px;transform:scaleX(0.8700);">100% INDEXED</div>
<div class="t" style="left:234.70px;top:138.01px;font-size:9.08px;color:#ffffff;-webkit-text-stroke:0.3px #ffffff;letter-spacing:0.169px;transform:scaleX(0.9300);">ADD KEYWORDS</div>
<div class="t" style="left:358.75px;top:137.82px;font-size:9.01px;color:#ffffff;-webkit-text-stroke:0.3px #ffffff;letter-spacing:0.090px;transform:scaleX(0.9300);">RECHECK DATA</div>
<div class="t" style="left:464.00px;top:136.66px;font-size:11.03px;color:#3f4856;letter-spacing:-0.165px;transform:scaleX(0.9658);">You can recheck rankings for 20000 keywords today.</div>
<div class="t" style="left:217.50px;top:203.97px;font-size:8.66px;color:#161c27;-webkit-text-stroke:0.35px #161c27;letter-spacing:0.968px;transform:scaleX(0.8700);">SEARCH VISIBILITY</div>
<div class="t" style="left:216.43px;top:224.99px;font-size:14.66px;color:#0d1117;-webkit-text-stroke:0.45px #0d1117;transform:scaleX(1.0669);">1%</div>
<div class="t" style="left:552.25px;top:203.97px;font-size:8.66px;color:#161c27;-webkit-text-stroke:0.35px #161c27;letter-spacing:1.095px;transform:scaleX(0.8700);">AVERAGE POSITION</div>
<div class="t" style="left:552.25px;top:224.99px;font-size:14.66px;color:#0d1117;-webkit-text-stroke:0.5px #0d1117;transform:scaleX(1.1361);">36</div>
<div class="t" style="left:584.00px;top:228.56px;font-size:8.73px;color:#11703a;-webkit-text-stroke:0.3px #11703a;transform:scaleX(0.9500);">7</div>
<div class="t" style="left:886.90px;top:203.97px;font-size:8.66px;color:#161c27;-webkit-text-stroke:0.35px #161c27;letter-spacing:1.091px;transform:scaleX(0.8700);">ORGANIC TRAFFIC</div>
<div class="t" style="left:886.13px;top:224.99px;font-size:14.66px;color:#0d1117;-webkit-text-stroke:0.5px #0d1117;transform:scaleX(1.1210);">196K</div>
<div class="t" style="left:938.75px;top:228.31px;font-size:8.73px;color:#dc2626;-webkit-text-stroke:0.2px #dc2626;transform:scaleX(1.0210);">5,7K</div>
<div class="t" style="left:299.80px;top:225.45px;font-size:7.26px;color:#8792a2;transform:scaleX(1.0500);">4</div>
<div class="t" style="left:299.80px;top:244.65px;font-size:7.26px;color:#8792a2;transform:scaleX(1.0500);">2</div>
<div class="t" style="left:299.80px;top:263.40px;font-size:7.26px;color:#8792a2;transform:scaleX(1.0500);">0</div>
<div class="t" style="left:633.00px;top:228.13px;font-size:7.82px;color:#8792a2;transform:scaleX(0.9347);">33</div>
<div class="t" style="left:633.00px;top:256.08px;font-size:7.82px;color:#8792a2;transform:scaleX(0.8347);">40</div>
<div class="t" style="left:633.00px;top:280.63px;font-size:7.82px;color:#8792a2;transform:scaleX(0.9347);">46</div>
<div class="t" style="left:969.00px;top:223.61px;font-size:8.38px;color:#8792a2;">8930</div>
<div class="t" style="left:969.00px;top:253.61px;font-size:8.38px;color:#8792a2;">5728</div>
<div class="t" style="left:969.00px;top:283.61px;font-size:8.38px;color:#8792a2;">2525</div>
<div class="t" style="left:216.70px;top:333.99px;font-size:16.90px;color:#141a24;-webkit-text-stroke:0.1px #141a24;letter-spacing:0.163px;">Distribution of top positions</div>
<div class="t" style="left:429.30px;top:334.51px;font-size:9.20px;color:#3b4a5e;font-style:italic;-webkit-text-stroke:0.25px #3b4a5e;">i</div>
<div class="t" style="left:217.65px;top:402.86px;font-size:9.50px;color:#161c27;-webkit-text-stroke:0.42px #161c27;letter-spacing:-0.142px;transform:scaleX(0.9537);">Top 1</div>
<div class="t" style="left:217.65px;top:419.99px;font-size:14.66px;color:#0d1117;-webkit-text-stroke:0.2px #0d1117;transform:scaleX(1.1300);">64</div>
<div class="t" style="left:249.20px;top:423.60px;font-size:9.15px;color:#11703a;-webkit-text-stroke:0.15px #11703a;transform:scaleX(1.1000);">6</div>
<div class="t" style="left:217.65px;top:441.62px;font-size:8.24px;color:#3b4a5e;transform:scaleX(0.9080);">BY SEARCH ENGINES</div>
<div class="t" style="left:378.20px;top:402.96px;font-size:9.50px;color:#161c27;-webkit-text-stroke:0.42px #161c27;letter-spacing:0.066px;">Top 2-3</div>
<div class="t" style="left:377.17px;top:420.09px;font-size:14.66px;color:#0d1117;-webkit-text-stroke:0.2px #0d1117;transform:scaleX(1.0296);">19</div>
<div class="t" style="left:406.70px;top:423.70px;font-size:9.15px;color:#dc2626;-webkit-text-stroke:0.15px #dc2626;transform:scaleX(0.9600);">7</div>
<div class="t" style="left:378.20px;top:441.72px;font-size:8.24px;color:#3b4a5e;transform:scaleX(0.9080);">BY SEARCH ENGINES</div>
<div class="t" style="left:217.65px;top:506.66px;font-size:9.50px;color:#161c27;-webkit-text-stroke:0.42px #161c27;letter-spacing:0.141px;">Top 4-5</div>
<div class="t" style="left:217.65px;top:523.79px;font-size:14.66px;color:#0d1117;-webkit-text-stroke:0.2px #0d1117;transform:scaleX(1.1052);">36</div>
<div class="t" style="left:248.90px;top:527.40px;font-size:9.15px;color:#11703a;-webkit-text-stroke:0.15px #11703a;transform:scaleX(1.0620);">20</div>
<div class="t" style="left:217.65px;top:545.42px;font-size:8.24px;color:#3b4a5e;transform:scaleX(0.9080);">BY SEARCH ENGINES</div>
<div class="t" style="left:378.10px;top:506.66px;font-size:9.50px;color:#161c27;-webkit-text-stroke:0.42px #161c27;letter-spacing:0.073px;">Top 6-10</div>
<div class="t" style="left:378.10px;top:523.79px;font-size:14.66px;color:#0d1117;-webkit-text-stroke:0.2px #0d1117;transform:scaleX(1.0773);">55</div>
<div class="t" style="left:408.50px;top:527.40px;font-size:9.15px;color:#11703a;-webkit-text-stroke:0.15px #11703a;transform:scaleX(0.9600);">7</div>
<div class="t" style="left:378.10px;top:545.42px;font-size:8.24px;color:#3b4a5e;transform:scaleX(0.9080);">BY SEARCH ENGINES</div>
<div class="t" style="left:217.65px;top:610.16px;font-size:9.50px;color:#161c27;-webkit-text-stroke:0.42px #161c27;letter-spacing:-0.039px;">Top 11-30</div>
<div class="t" style="left:217.65px;top:627.29px;font-size:14.66px;color:#0d1117;-webkit-text-stroke:0.2px #0d1117;transform:scaleX(1.0719);">223</div>
<div class="t" style="left:256.70px;top:630.90px;font-size:9.15px;color:#11703a;-webkit-text-stroke:0.15px #11703a;transform:scaleX(1.0521);">35</div>
<div class="t" style="left:217.65px;top:648.92px;font-size:8.24px;color:#3b4a5e;transform:scaleX(0.9080);">BY SEARCH ENGINES</div>
<div class="t" style="left:378.10px;top:610.16px;font-size:9.50px;color:#161c27;-webkit-text-stroke:0.42px #161c27;letter-spacing:-0.028px;">Top 31-100</div>
<div class="t" style="left:378.10px;top:627.29px;font-size:14.66px;color:#0d1117;-webkit-text-stroke:0.2px #0d1117;transform:scaleX(1.0773);">87</div>
<div class="t" style="left:408.50px;top:630.90px;font-size:9.15px;color:#dc2626;-webkit-text-stroke:0.15px #dc2626;transform:scaleX(1.0422);">33</div>
<div class="t" style="left:378.10px;top:648.92px;font-size:8.24px;color:#3b4a5e;transform:scaleX(0.9080);">BY SEARCH ENGINES</div>
<div class="t" style="left:548.00px;top:386.48px;font-size:9.36px;color:#2d3a4e;-webkit-text-stroke:0.35px #2d3a4e;letter-spacing:0.327px;transform:scaleX(0.8700);">CURRENT</div>
<div class="t" style="left:606.30px;top:386.48px;font-size:9.36px;color:#4a5568;-webkit-text-stroke:0.25px #4a5568;letter-spacing:-0.140px;transform:scaleX(0.8875);">7D</div>
<div class="t" style="left:633.80px;top:386.48px;font-size:9.36px;color:#4a5568;-webkit-text-stroke:0.25px #4a5568;letter-spacing:-0.140px;transform:scaleX(0.9191);">1M</div>
<div class="t" style="left:662.20px;top:386.48px;font-size:9.36px;color:#4a5568;-webkit-text-stroke:0.25px #4a5568;letter-spacing:-0.097px;">3M</div>
<div class="t" style="left:691.70px;top:386.48px;font-size:9.36px;color:#4a5568;-webkit-text-stroke:0.25px #4a5568;letter-spacing:0.403px;">6M</div>
<div class="t" style="left:799.70px;top:386.61px;font-size:8.38px;color:#4a5568;-webkit-text-stroke:0.2px #4a5568;letter-spacing:0.454px;transform:scaleX(0.8700);">TOP 1</div>
<div class="t" style="left:843.00px;top:386.61px;font-size:8.38px;color:#4a5568;-webkit-text-stroke:0.2px #4a5568;letter-spacing:0.977px;transform:scaleX(0.8700);">TOP 2-3</div>
<div class="t" style="left:896.20px;top:386.61px;font-size:8.38px;color:#4a5568;-webkit-text-stroke:0.2px #4a5568;letter-spacing:0.939px;transform:scaleX(0.8700);">TOP 4-5</div>
<div class="t" style="left:949.40px;top:386.61px;font-size:8.38px;color:#4a5568;-webkit-text-stroke:0.2px #4a5568;letter-spacing:1.042px;transform:scaleX(0.8700);">TOP 6-10</div>
<div class="t" style="left:1007.00px;top:386.61px;font-size:8.38px;color:#4a5568;-webkit-text-stroke:0.2px #4a5568;letter-spacing:0.932px;transform:scaleX(0.8700);">TOP 11-30</div>
<div class="t" style="left:1069.20px;top:386.61px;font-size:8.38px;color:#4a5568;-webkit-text-stroke:0.2px #4a5568;letter-spacing:0.976px;transform:scaleX(0.8700);">TOP 31-100</div>
<div class="t" style="left:1136.90px;top:386.61px;font-size:8.38px;color:#4a5568;-webkit-text-stroke:0.2px #4a5568;letter-spacing:1.148px;transform:scaleX(0.8700);">TOTAL</div>
<div class="t" style="left:547.50px;top:439.68px;font-size:10.06px;color:#5b6b7f;transform:scaleX(0.9723);">800</div>
<div class="t" style="left:547.50px;top:488.58px;font-size:10.06px;color:#5b6b7f;transform:scaleX(0.9723);">600</div>
<div class="t" style="left:547.50px;top:537.58px;font-size:10.06px;color:#5b6b7f;transform:scaleX(0.9723);">400</div>
<div class="t" style="left:547.50px;top:586.58px;font-size:10.06px;color:#5b6b7f;transform:scaleX(0.9723);">200</div>
<div class="t" style="left:586.00px;top:654.32px;font-size:10.61px;color:#4a5a6e;transform:scaleX(1.0176);">Oct-02</div>
<div class="t" style="left:627.59px;top:654.32px;font-size:10.61px;color:#4a5a6e;transform:scaleX(1.0176);">Oct-04</div>
<div class="t" style="left:669.18px;top:654.32px;font-size:10.61px;color:#4a5a6e;transform:scaleX(1.0176);">Oct-06</div>
<div class="t" style="left:710.77px;top:654.32px;font-size:10.61px;color:#4a5a6e;transform:scaleX(1.0176);">Oct-08</div>
<div class="t" style="left:752.36px;top:654.32px;font-size:10.61px;color:#4a5a6e;transform:scaleX(1.0176);">Oct-10</div>
<div class="t" style="left:793.95px;top:654.32px;font-size:10.61px;color:#4a5a6e;transform:scaleX(1.0176);">Oct-12</div>
<div class="t" style="left:835.54px;top:654.32px;font-size:10.61px;color:#4a5a6e;transform:scaleX(1.0176);">Oct-14</div>
<div class="t" style="left:877.13px;top:654.32px;font-size:10.61px;color:#4a5a6e;transform:scaleX(1.0176);">Oct-16</div>
<div class="t" style="left:918.72px;top:654.32px;font-size:10.61px;color:#4a5a6e;transform:scaleX(1.0176);">Oct-18</div>
<div class="t" style="left:960.31px;top:654.32px;font-size:10.61px;color:#4a5a6e;transform:scaleX(1.0176);">Oct-20</div>
<div class="t" style="left:1001.90px;top:654.32px;font-size:10.61px;color:#4a5a6e;transform:scaleX(1.0176);">Oct-22</div>
<div class="t" style="left:1043.49px;top:654.32px;font-size:10.61px;color:#4a5a6e;transform:scaleX(1.0176);">Oct-24</div>
<div class="t" style="left:1085.08px;top:654.32px;font-size:10.61px;color:#4a5a6e;transform:scaleX(1.0176);">Oct-26</div>
<div class="t" style="left:1126.67px;top:654.32px;font-size:10.61px;color:#4a5a6e;transform:scaleX(1.0176);">Oct-28</div>
<div class="t" style="left:1169.00px;top:654.32px;font-size:10.61px;color:#4a5a6e;transform:scaleX(1.0176);">Oct-30</div>
<div class="t" style="left:697.20px;top:500.18px;font-size:10.06px;color:#1f2633;-webkit-text-stroke:0.35px #1f2633;letter-spacing:-0.151px;transform:scaleX(0.9835);">Oct-13 2021</div>
<div class="t" style="left:705.80px;top:521.92px;font-size:9.78px;color:#1f2633;-webkit-text-stroke:0.1px #1f2633;">Total:</div>
<div class="t" style="left:787.14px;top:521.92px;font-size:9.78px;color:#1f2633;-webkit-text-stroke:0.15px #1f2633;">121</div>
<div class="t" style="left:705.80px;top:538.02px;font-size:9.78px;color:#1f2633;-webkit-text-stroke:0.1px #1f2633;">Top 31-100:</div>
<div class="t" style="left:787.14px;top:538.02px;font-size:9.78px;color:#1f2633;-webkit-text-stroke:0.15px #1f2633;">101</div>
<div class="t" style="left:705.80px;top:554.12px;font-size:9.78px;color:#1f2633;-webkit-text-stroke:0.1px #1f2633;">Top 11-30:</div>
<div class="t" style="left:787.86px;top:554.12px;font-size:9.78px;color:#1f2633;-webkit-text-stroke:0.15px #1f2633;">211</div>
<div class="t" style="left:705.80px;top:570.22px;font-size:9.78px;color:#1f2633;-webkit-text-stroke:0.1px #1f2633;">Top 6-10:</div>
<div class="t" style="left:792.57px;top:570.22px;font-size:9.78px;color:#1f2633;-webkit-text-stroke:0.15px #1f2633;">48</div>
<div class="t" style="left:705.80px;top:586.32px;font-size:9.78px;color:#1f2633;-webkit-text-stroke:0.1px #1f2633;">Top 4-5:</div>
<div class="t" style="left:791.57px;top:586.32px;font-size:9.78px;color:#1f2633;-webkit-text-stroke:0.15px #1f2633;">25</div>
<div class="t" style="left:705.80px;top:602.42px;font-size:9.78px;color:#1f2633;-webkit-text-stroke:0.1px #1f2633;">Top 2-3:</div>
<div class="t" style="left:792.57px;top:602.42px;font-size:9.78px;color:#1f2633;-webkit-text-stroke:0.15px #1f2633;">21</div>
<div class="t" style="left:705.80px;top:618.52px;font-size:9.78px;color:#1f2633;-webkit-text-stroke:0.1px #1f2633;">Top 1:</div>
<div class="t" style="left:792.57px;top:618.52px;font-size:9.78px;color:#1f2633;-webkit-text-stroke:0.15px #1f2633;">59</div>
</div></div>
<svg width="1200" height="691" style="position:absolute;left:0;top:0;z-index:5" shape-rendering="crispEdges">
<path d="M0,0 H14 C8,2 2,8 0,14 Z" fill="#000"/>
<path d="M1200,0 H1186 C1192,2 1198,8 1200,14 Z" fill="#000"/>
<path d="M0,691 H14 C8,689 2,683 0,677 Z" fill="#000"/>
<path d="M1200,691 H1186 C1192,689 1198,683 1200,677 Z" fill="#000"/>
</svg>
</body></html>
